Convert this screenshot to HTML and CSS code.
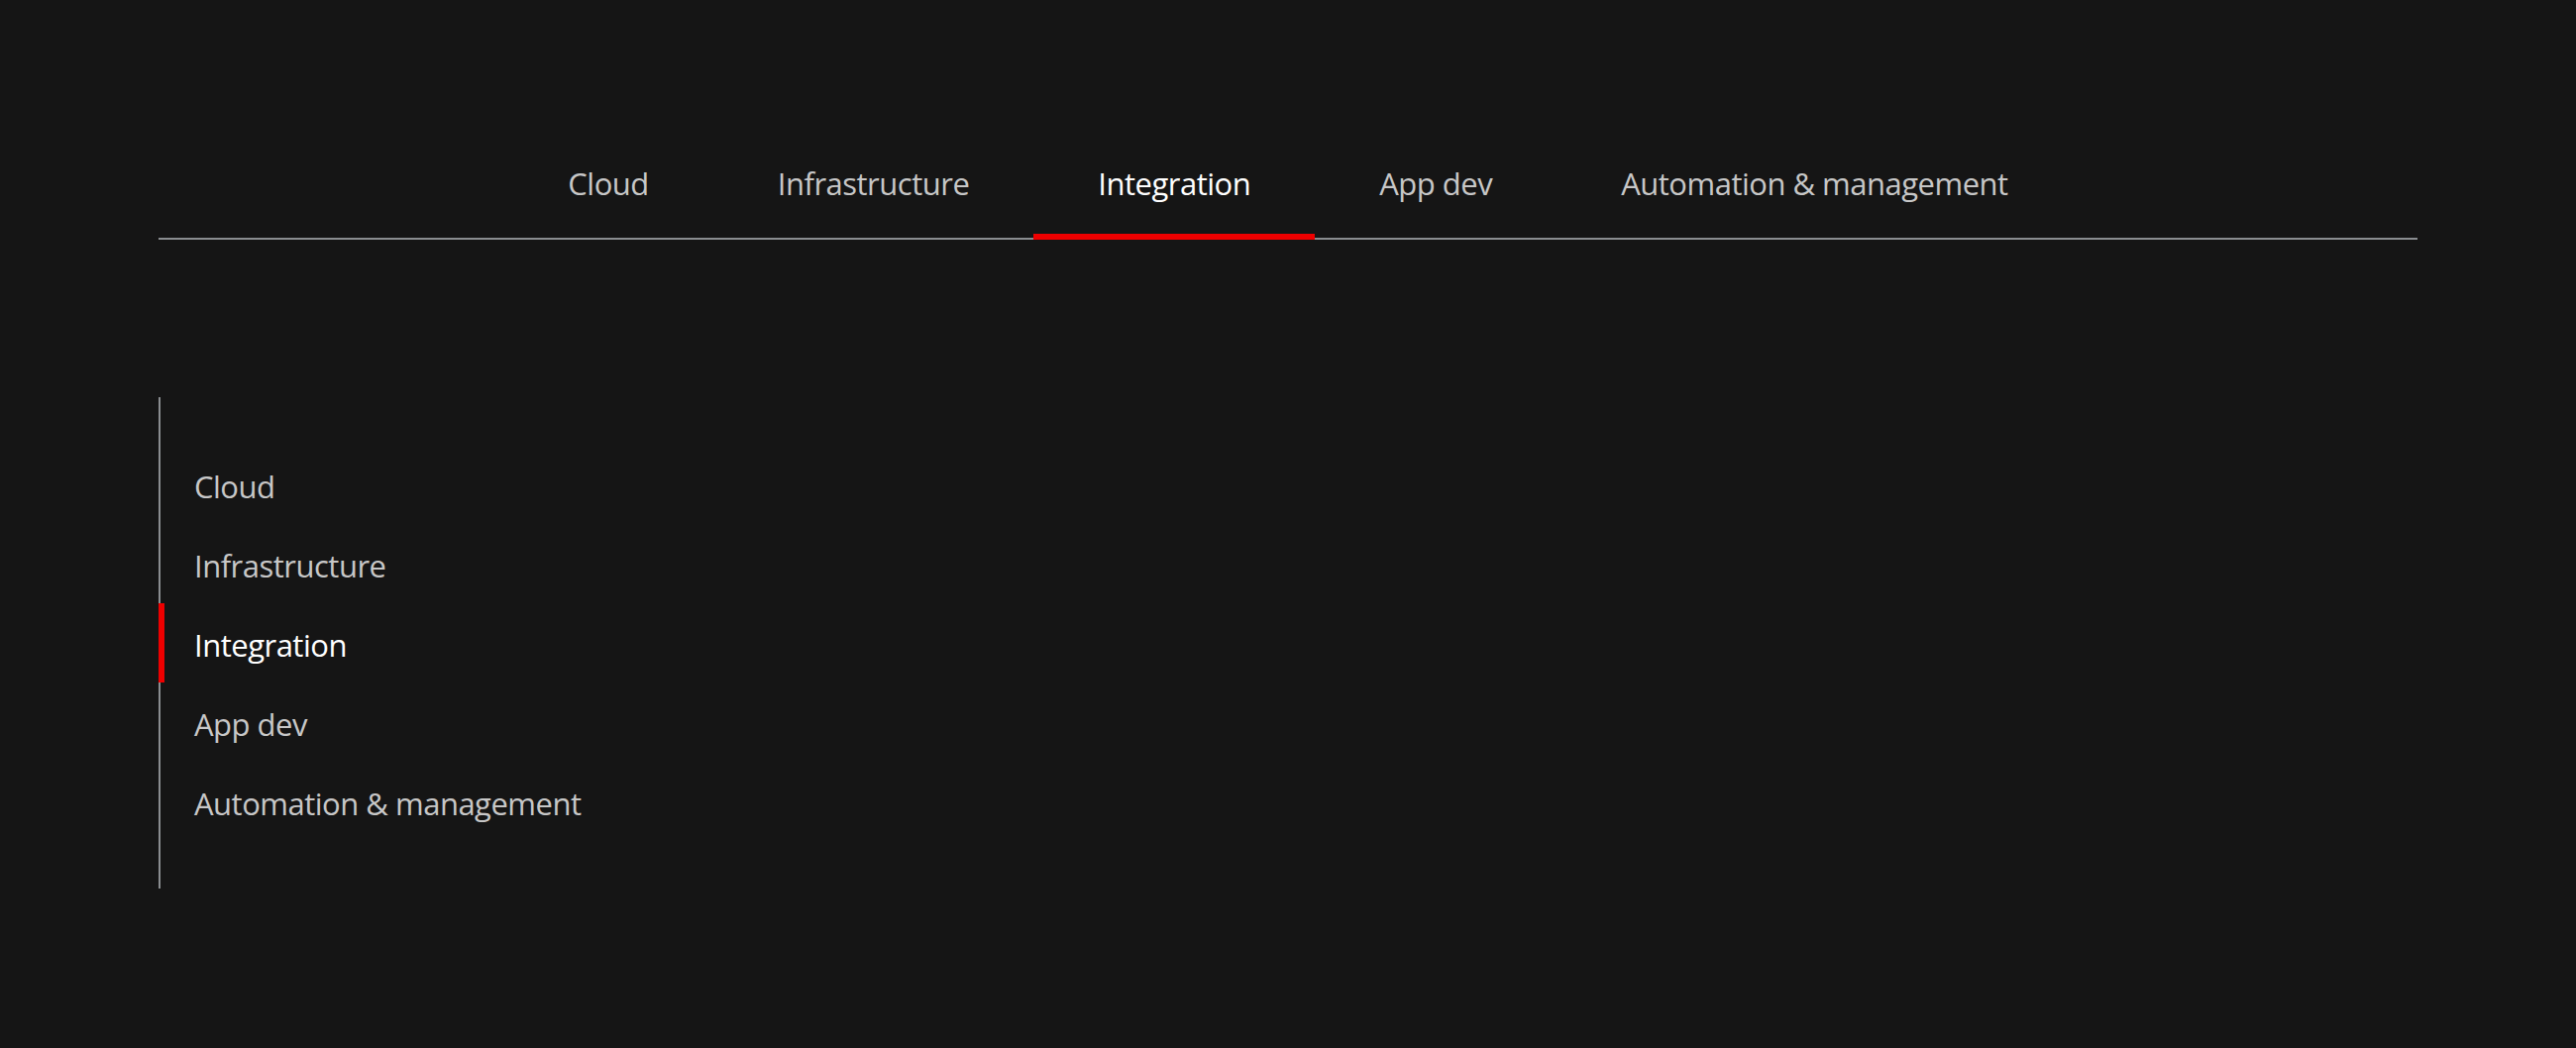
FILE: index.html
```html
<!DOCTYPE html>
<html lang="en">
<head>
    <meta charset="UTF-8">
    <meta name="viewport" content="width=device-width, initial-scale=1.0">
    <title>Tabs</title>
    <link rel="stylesheet" href="styles.css">
</head>
<body>
    <div class="page">
        <nav class="tabs">
            <a class="tab" href="#">Cloud</a>
            <a class="tab" href="#">Infrastructure</a>
            <a class="tab active" href="#">Integration</a>
            <a class="tab" href="#">App dev</a>
            <a class="tab" href="#">Automation &amp; management</a>
        </nav>

        <nav class="side-tabs">
            <a class="side-tab" href="#">Cloud</a>
            <a class="side-tab" href="#">Infrastructure</a>
            <a class="side-tab active" href="#">Integration</a>
            <a class="side-tab" href="#">App dev</a>
            <a class="side-tab" href="#">Automation &amp; management</a>
        </nav>
    </div>
</body>
</html>
```

FILE: styles.css
```css
body {
    margin: 0;
    background: #151515;
    font-family: 'Open Sans', 'Liberation Sans', sans-serif;
    color: #c7c7c7;
}
.page {
    padding: 138px 160px 0;
}
.tabs {
    display: flex;
    justify-content: center;
    border-bottom: 2px solid #8a8d90;
}
.tab {
    display: block;
    padding: 23px 65px 27px;
    margin-bottom: -2px;
    border-bottom: 6px solid transparent;
    font-size: 31px;
    letter-spacing: -0.5px;
    line-height: 48px;
    color: #c7c7c7;
    text-decoration: none;
}
.tab.active {
    color: #fff;
    border-bottom-color: #e00;
}
.side-tabs {
    display: flex;
    flex-direction: column;
    align-items: flex-start;
    margin-top: 159px;
    padding: 48px 0;
    border-left: 2px solid #8a8d90;
}
.side-tab {
    display: block;
    margin-left: -2px;
    padding: 4px 0 0 30px;
    border-left: 6px solid transparent;
    font-size: 31px;
    letter-spacing: -0.5px;
    line-height: 76px;
    color: #c7c7c7;
    text-decoration: none;
}
.side-tab.active {
    color: #fff;
    border-left-color: #e00;
}
```
